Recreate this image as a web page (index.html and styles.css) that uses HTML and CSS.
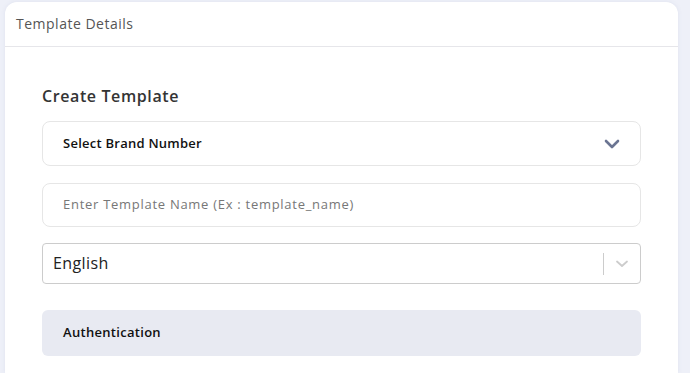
FILE: index.html
```html
<!DOCTYPE html>
<html>
<head>
<meta charset="utf-8">
<link rel="stylesheet" href="styles.css">
</head>
<body>
<div class="card">
  <div class="card-header">Template Details</div>
  <div class="card-body">
    <h2 class="title">Create Template</h2>
    <div class="field select-brand">
      <span>Select Brand Number</span>
      <svg class="chev" width="16" height="10" viewBox="0 0 16 10"><path d="M2 2 L8 8 L14 2" fill="none" stroke="#6b7592" stroke-width="2.6" stroke-linecap="round" stroke-linejoin="round"/></svg>
    </div>
    <div class="field input-name">
      <span>Enter Template Name (Ex : template_name)</span>
    </div>
    <div class="lang">
      <span class="lang-val">English</span>
      <div class="lang-ind">
        <span class="sep"></span>
        <svg class="chev2" width="14" height="8" viewBox="0 0 14 8"><path d="M2 1.5 L7 6 L12 1.5" fill="none" stroke="#cccccc" stroke-width="1.8" stroke-linecap="round" stroke-linejoin="round"/></svg>
      </div>
    </div>
    <div class="auth">Authentication</div>
  </div>
</div>
</body>
</html>
```
FILE: styles.css
```css
html, body {
  margin: 0;
  padding: 0;
}
* {
  box-sizing: border-box;
}
body {
  background: #eef0f8;
  font-family: "Open Sans", "Liberation Sans", sans-serif;
  width: 690px;
  height: 373px;
  overflow: hidden;
}
.card {
  margin: 2px 0 0 5px;
  width: 673px;
  height: 371px;
  background: #fff;
  border-radius: 12px 12px 0 0;
  box-shadow: 0 0 4px rgba(120, 130, 170, 0.12);
}
.card-header {
  height: 45px;
  border-bottom: 1px solid #e6e6ea;
  padding-left: 11px;
  line-height: 44px;
  font-size: 14px;
  letter-spacing: 0.5px;
  color: #555;
}
.card-body {
  padding: 38px 37px 0 37px;
}
.title {
  margin: 0 0 14px 0;
  font-size: 16px;
  font-weight: 600;
  color: #343434;
  letter-spacing: 0.6px;
  line-height: 22px;
}
.field {
  border: 1px solid #e6e6e6;
  border-radius: 8px;
  display: flex;
  align-items: center;
  padding: 0 20px 2px 20px;
  font-size: 13px;
}
.select-brand {
  height: 45px;
  justify-content: space-between;
  color: #111;
  font-weight: 600;
  letter-spacing: 0.25px;
  margin-bottom: 17px;
}
.chev {
  margin-top: 2px;
}
.input-name {
  height: 44px;
  color: #777;
  letter-spacing: 0.72px;
  margin-bottom: 16px;
}
.lang {
  height: 41px;
  border: 1px solid #cccccc;
  border-radius: 4px;
  display: flex;
  align-items: center;
  justify-content: space-between;
  padding-left: 10px;
}
.lang-val {
  font-size: 16px;
  color: #222;
  letter-spacing: 0.4px;
  margin-bottom: 2px;
}
.lang-ind {
  display: flex;
  align-items: center;
  height: 100%;
}
.sep {
  width: 1px;
  height: 22px;
  background: #cccccc;
}
.chev2 {
  margin: 0 11px 0 11px;
}
.auth {
  margin-top: 26px;
  height: 46px;
  background: #e8eaf2;
  border-radius: 6px;
  display: flex;
  align-items: center;
  padding: 0 0 2px 21px;
  font-size: 13px;
  font-weight: 600;
  letter-spacing: 0.3px;
  color: #111;
}
```
